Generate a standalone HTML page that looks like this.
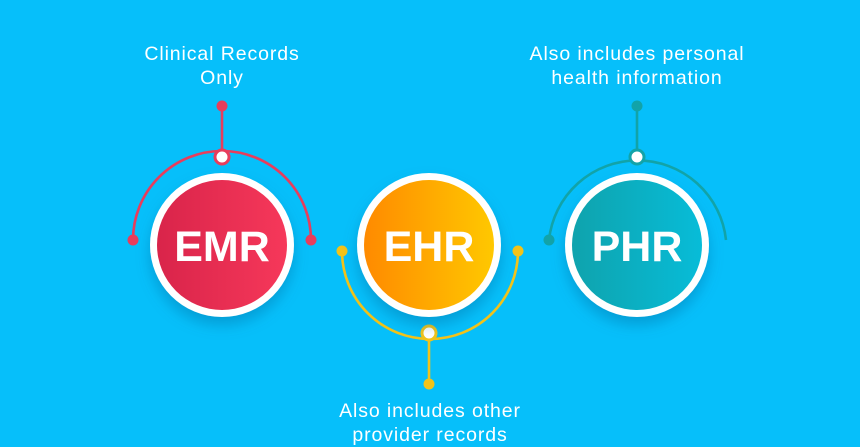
<!DOCTYPE html>
<html><head><meta charset="utf-8"><style>
html,body{margin:0;padding:0}
body{width:860px;height:434px;overflow:hidden;background:#06bffa;font-family:"Liberation Sans",sans-serif;position:relative}
.t{position:absolute;color:#fff;font-size:19.5px;text-align:center;line-height:24px;letter-spacing:0.9px;white-space:nowrap}
</style></head><body>
<svg width="860" height="434" style="position:absolute;left:0;top:0">
<defs>
<linearGradient id="r" x1="0" x2="1"><stop offset="0" stop-color="#d9244a"/><stop offset="1" stop-color="#f6385a"/></linearGradient>
<linearGradient id="o" x1="0" x2="1"><stop offset="0" stop-color="#ff8a00"/><stop offset="1" stop-color="#ffc800"/></linearGradient>
<linearGradient id="b" x1="0" x2="1"><stop offset="0" stop-color="#0fa3ad"/><stop offset="1" stop-color="#07bcd8"/></linearGradient>
<filter id="s" x="-30%" y="-30%" width="160%" height="170%"><feDropShadow dx="0" dy="8" stdDeviation="7" flood-color="#005f90" flood-opacity="0.35"/></filter>
</defs>
<g fill="none" stroke-width="2.6">
<path d="M133 240 A89 89 0 0 1 311 240" stroke="#e83d5c"/>
<line x1="222" y1="106" x2="222" y2="157" stroke="#e83d5c"/>
<path d="M342 251 A88 88 0 0 0 518 251" stroke="#f2c319"/>
<line x1="429" y1="333" x2="429" y2="384" stroke="#f2c319"/>
<path d="M549 240 A89 89 0 0 1 726 240" stroke="#12a3a8"/>
<line x1="637" y1="106" x2="637" y2="157" stroke="#12a3a8"/>
</g>
<g fill="#e83d5c"><circle cx="222" cy="106" r="5.5"/><circle cx="133" cy="240" r="5.5"/><circle cx="311" cy="240" r="5.5"/></g>
<circle cx="222" cy="157" r="7" fill="#fff" stroke="#e83d5c" stroke-width="3"/>
<g fill="#f2c319"><circle cx="429" cy="384" r="5.5"/><circle cx="342" cy="251" r="5.5"/><circle cx="518" cy="251" r="5.5"/></g>
<circle cx="429" cy="333" r="7" fill="#fff" stroke="#f2c319" stroke-width="3"/>
<g fill="#12a3a8"><circle cx="637" cy="106" r="5.5"/><circle cx="549" cy="240" r="5.5"/></g>
<circle cx="637" cy="157" r="7" fill="#fff" stroke="#12a3a8" stroke-width="3"/>
<g filter="url(#s)">
<circle cx="222" cy="245" r="72" fill="#fff"/>
<circle cx="429" cy="245" r="72" fill="#fff"/>
<circle cx="637" cy="245" r="72" fill="#fff"/>
</g>
<circle cx="222" cy="245" r="65" fill="url(#r)"/>
<circle cx="429" cy="245" r="65" fill="url(#o)"/>
<circle cx="637" cy="245" r="65" fill="url(#b)"/>
<g fill="#fff" font-family="Liberation Sans, sans-serif" font-weight="bold" font-size="43" text-anchor="middle">
<text x="222" y="261">EMR</text><text x="429" y="261">EHR</text><text x="637" y="261">PHR</text>
</g>
</svg>
<div class="t" style="left:92px;top:42px;width:260px">Clinical Records<br>Only</div>
<div class="t" style="left:487px;top:42px;width:300px">Also includes personal<br>health information</div>
<div class="t" style="left:290px;top:399px;width:280px">Also includes other<br>provider records</div>
</body></html>
